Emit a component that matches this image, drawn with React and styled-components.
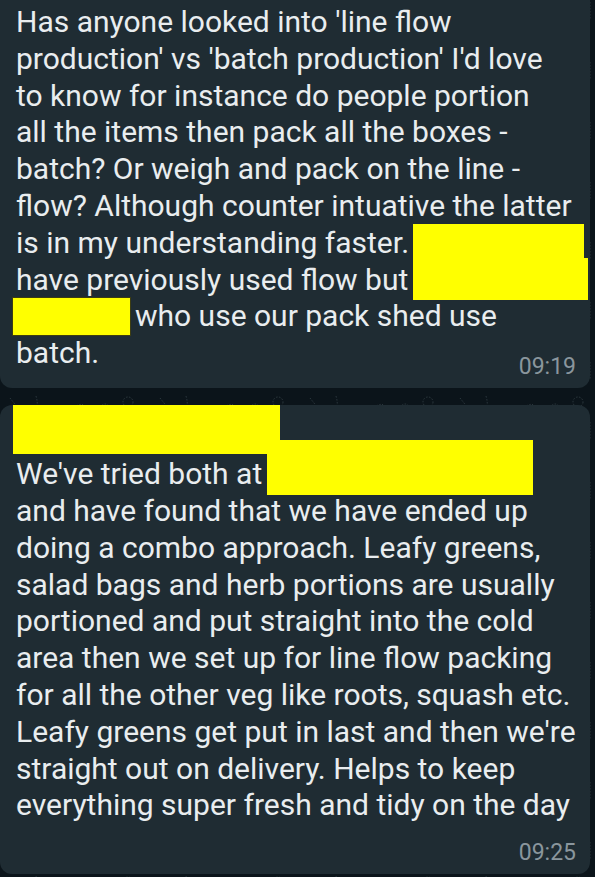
import styled, { createGlobalStyle } from "styled-components";

const GlobalStyle = createGlobalStyle`
    html, body {
        margin: 0;
        padding: 0;
        background: #0b141a;
    }
    body {
        width: 595px;
        height: 877px;
        overflow: hidden;
        font-family: Roboto, "Noto Sans", sans-serif;
    }
`;

/* faint doodle wallpaper behind the bubbles */
const doodles = encodeURIComponent(`
<svg xmlns="http://www.w3.org/2000/svg" width="150" height="60" viewBox="0 0 150 60">
  <g fill="none" stroke="#2a363c" stroke-width="1" stroke-dasharray="1.5 1.5">
    <path d="M10 8 l8 10 l-6 6"/>
    <path d="M36 6 q4 14 -4 22"/>
    <path d="M62 20 l20 -6 l4 4"/>
    <circle cx="105" cy="18" r="4"/>
    <circle cx="128" cy="12" r="5"/>
    <path d="M18 40 q10 -10 20 0 q10 10 20 0"/>
    <path d="M80 36 c6 -8 14 -8 18 0 s10 8 16 0"/>
    <path d="M132 34 l6 14 M140 32 v18"/>
  </g>
</svg>`);

const Chat = styled.main`
    display: flex;
    flex-direction: column;
    gap: 17px;
    width: 595px;
    height: 877px;
    padding-right: 5px;
    box-sizing: border-box;
    background-color: #0b141a;
    background-image: url("data:image/svg+xml,${doodles}");
    background-position: 0 390px;
`;

/* Incoming message bubble */
const Bubble = styled.article`
    position: relative;
    display: flex;
    flex-direction: column;
    background-color: #1f2c33;
    border-radius: ${(p) => (p.$cut ? "0 0 12px 12px" : "12px")};
    padding: ${(p) => p.$pad};
    color: #e9edef;
`;

const Body = styled.div`
    padding-left: 16px;
    font-size: 30px;
    line-height: 36.8px;
`;

const Line = styled.div`
    white-space: nowrap;
`;

const Footer = styled.div`
    display: flex;
    justify-content: space-between;
    align-items: flex-end;
    margin-top: ${(p) => p.$top || "0"};
`;

const Time = styled.span`
    font-size: 23px;
    line-height: 24px;
    color: #8a969d;
    margin-right: 14px;
    margin-bottom: ${(p) => p.$drop || "0"};
`;

/* Yellow redaction marks */
const Mark = styled.span`
    display: inline-block;
    vertical-align: top;
    width: ${(p) => p.$w}px;
    height: ${(p) => p.$h}px;
    margin: 0 ${(p) => p.$gap || 0}px 0 -3px;
    background: #ffff00;
    box-shadow: 0 0 0 1px #3d3d12;
`;

const Header = styled.div`
    height: 51px;
`;

const Overlay = styled.div`
    position: absolute;
    inset: 0;
    pointer-events: none;
    filter: drop-shadow(0 0 0.7px #2c2c05) drop-shadow(0 0 0.5px #2c2c05);
`;

const Patch = styled.div`
    position: absolute;
    left: ${(p) => p.$x}px;
    top: ${(p) => p.$y}px;
    width: ${(p) => p.$w}px;
    height: ${(p) => p.$h}px;
    background: #ffff00;
`;

const first = [
    "Has anyone looked into 'line flow",
    "production' vs 'batch production' I'd love",
    "to know for instance do people portion",
    "all the items then pack all the boxes -",
    "batch? Or weigh and pack on the line -",
    "flow? Although counter intuative the latter",
    "is in my understanding faster.",
    "have previously used flow but",
];

const second = [
    "We've tried both at",
    "and have found that we have ended up",
    "doing a combo approach. Leafy greens,",
    "salad bags and herb portions are usually",
    "portioned and put straight into the cold",
    "area then we set up for line flow packing",
    "for all the other veg like roots, squash etc.",
    "Leafy greens get put in last and then we're",
    "straight out on delivery. Helps to keep",
    "everything super fresh and tidy on the day",
];

export default function App() {
    return (
        <>
            <GlobalStyle />
            <Chat>
                <Bubble $cut $pad="4px 0 16px 0">
                    <Body>
                        {first.map((t) => (
                            <Line key={t}>{t}</Line>
                        ))}
                        <Line>
                            <Mark $w={117} $h={37} $gap={5} />
                            who use our pack shed use
                        </Line>
                        <Footer>
                            <Line>batch.</Line>
                            <Time $drop="-7px">09:19</Time>
                        </Footer>
                    </Body>
                    <Overlay>
                        <Patch $x={413} $y={224} $w={171} $h={36} />
                        <Patch $x={413} $y={258} $w={175} $h={42} />
                    </Overlay>
                </Bubble>

                <Bubble $pad="0 0 9px 0">
                    <Header />
                    <Body>
                        {second.map((t) => (
                            <Line key={t}>{t}</Line>
                        ))}
                    </Body>
                    <Footer $top="17px">
                        <span />
                        <Time>09:25</Time>
                    </Footer>
                    <Overlay>
                        <Patch $x={13} $y={0} $w={267} $h={49} />
                        <Patch $x={267} $y={35} $w={266} $h={55} />
                    </Overlay>
                </Bubble>
            </Chat>
        </>
    );
}
